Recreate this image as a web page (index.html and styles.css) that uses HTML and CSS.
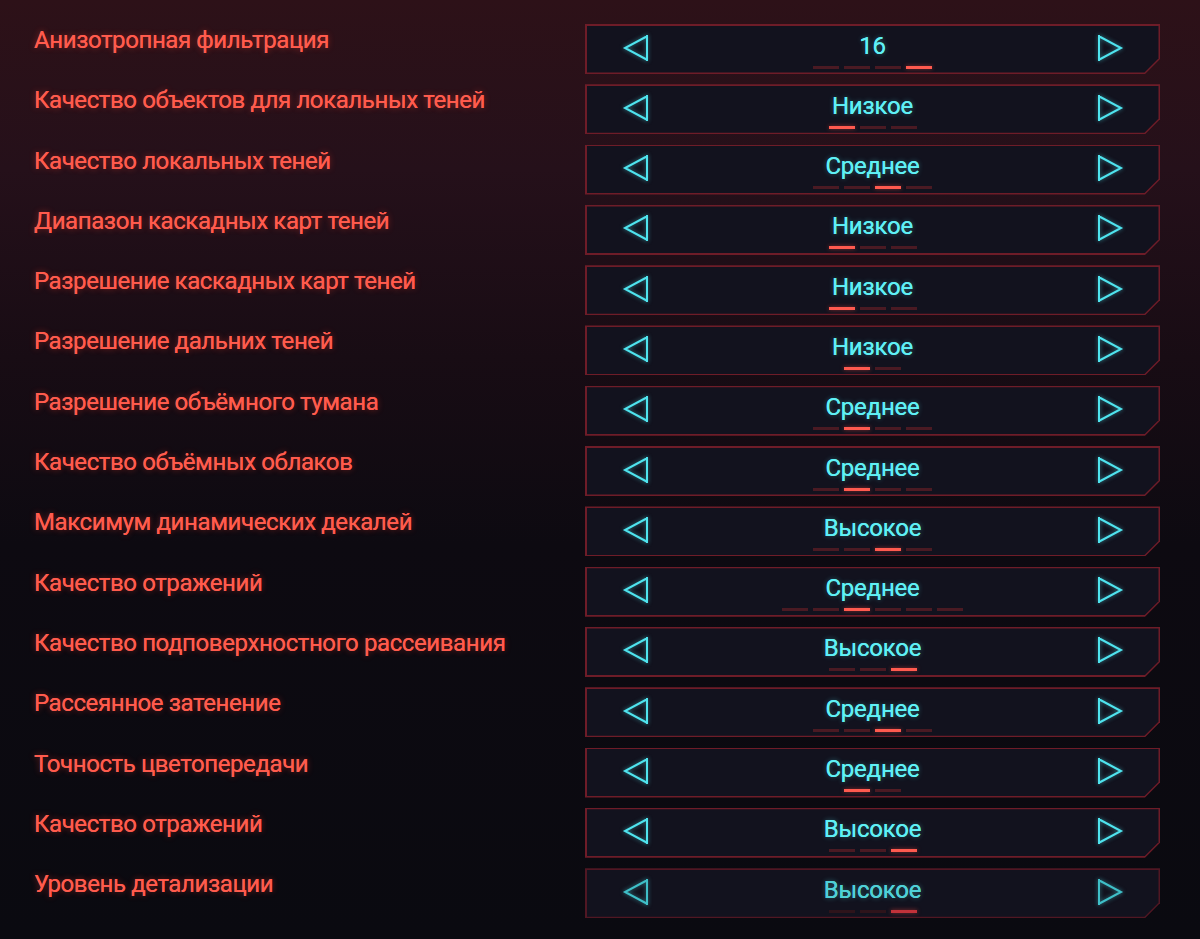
FILE: index.html
```html
<!DOCTYPE html>
<html lang="ru">
<head>
<meta charset="utf-8">
<title>Настройки графики</title>
<link rel="stylesheet" href="styles.css">
</head>
<body>
<main class="settings">
  <div class="row"><div class="label">Анизотропная фильтрация</div><div class="box"><div class="box-inner">
    <svg class="arrow" viewBox="0 0 28 30"><path d="M25 2V28M25.5 3L3 15L25.5 27"/></svg>
    <div class="center"><div class="value">16</div><div class="segs"><i></i><i></i><i></i><i class="on"></i></div></div>
    <svg class="arrow" viewBox="0 0 28 30"><path d="M3 2V28M2.5 3L25 15L2.5 27"/></svg>
  </div></div></div>

  <div class="row"><div class="label">Качество объектов для локальных теней</div><div class="box"><div class="box-inner">
    <svg class="arrow" viewBox="0 0 28 30"><path d="M25 2V28M25.5 3L3 15L25.5 27"/></svg>
    <div class="center"><div class="value">Низкое</div><div class="segs"><i class="on"></i><i></i><i></i></div></div>
    <svg class="arrow" viewBox="0 0 28 30"><path d="M3 2V28M2.5 3L25 15L2.5 27"/></svg>
  </div></div></div>

  <div class="row"><div class="label">Качество локальных теней</div><div class="box"><div class="box-inner">
    <svg class="arrow" viewBox="0 0 28 30"><path d="M25 2V28M25.5 3L3 15L25.5 27"/></svg>
    <div class="center"><div class="value">Среднее</div><div class="segs"><i></i><i></i><i class="on"></i><i></i></div></div>
    <svg class="arrow" viewBox="0 0 28 30"><path d="M3 2V28M2.5 3L25 15L2.5 27"/></svg>
  </div></div></div>

  <div class="row"><div class="label">Диапазон каскадных карт теней</div><div class="box"><div class="box-inner">
    <svg class="arrow" viewBox="0 0 28 30"><path d="M25 2V28M25.5 3L3 15L25.5 27"/></svg>
    <div class="center"><div class="value">Низкое</div><div class="segs"><i class="on"></i><i></i><i></i></div></div>
    <svg class="arrow" viewBox="0 0 28 30"><path d="M3 2V28M2.5 3L25 15L2.5 27"/></svg>
  </div></div></div>

  <div class="row"><div class="label">Разрешение каскадных карт теней</div><div class="box"><div class="box-inner">
    <svg class="arrow" viewBox="0 0 28 30"><path d="M25 2V28M25.5 3L3 15L25.5 27"/></svg>
    <div class="center"><div class="value">Низкое</div><div class="segs"><i class="on"></i><i></i><i></i></div></div>
    <svg class="arrow" viewBox="0 0 28 30"><path d="M3 2V28M2.5 3L25 15L2.5 27"/></svg>
  </div></div></div>

  <div class="row"><div class="label">Разрешение дальних теней</div><div class="box"><div class="box-inner">
    <svg class="arrow" viewBox="0 0 28 30"><path d="M25 2V28M25.5 3L3 15L25.5 27"/></svg>
    <div class="center"><div class="value">Низкое</div><div class="segs"><i class="on"></i><i></i></div></div>
    <svg class="arrow" viewBox="0 0 28 30"><path d="M3 2V28M2.5 3L25 15L2.5 27"/></svg>
  </div></div></div>

  <div class="row"><div class="label">Разрешение объёмного тумана</div><div class="box"><div class="box-inner">
    <svg class="arrow" viewBox="0 0 28 30"><path d="M25 2V28M25.5 3L3 15L25.5 27"/></svg>
    <div class="center"><div class="value">Среднее</div><div class="segs"><i></i><i class="on"></i><i></i><i></i></div></div>
    <svg class="arrow" viewBox="0 0 28 30"><path d="M3 2V28M2.5 3L25 15L2.5 27"/></svg>
  </div></div></div>

  <div class="row"><div class="label">Качество объёмных облаков</div><div class="box"><div class="box-inner">
    <svg class="arrow" viewBox="0 0 28 30"><path d="M25 2V28M25.5 3L3 15L25.5 27"/></svg>
    <div class="center"><div class="value">Среднее</div><div class="segs"><i></i><i class="on"></i><i></i><i></i></div></div>
    <svg class="arrow" viewBox="0 0 28 30"><path d="M3 2V28M2.5 3L25 15L2.5 27"/></svg>
  </div></div></div>

  <div class="row"><div class="label">Максимум динамических декалей</div><div class="box"><div class="box-inner">
    <svg class="arrow" viewBox="0 0 28 30"><path d="M25 2V28M25.5 3L3 15L25.5 27"/></svg>
    <div class="center"><div class="value">Высокое</div><div class="segs"><i></i><i></i><i class="on"></i><i></i></div></div>
    <svg class="arrow" viewBox="0 0 28 30"><path d="M3 2V28M2.5 3L25 15L2.5 27"/></svg>
  </div></div></div>

  <div class="row"><div class="label">Качество отражений</div><div class="box"><div class="box-inner">
    <svg class="arrow" viewBox="0 0 28 30"><path d="M25 2V28M25.5 3L3 15L25.5 27"/></svg>
    <div class="center"><div class="value">Среднее</div><div class="segs"><i></i><i></i><i class="on"></i><i></i><i></i><i></i></div></div>
    <svg class="arrow" viewBox="0 0 28 30"><path d="M3 2V28M2.5 3L25 15L2.5 27"/></svg>
  </div></div></div>

  <div class="row"><div class="label">Качество подповерхностного рассеивания</div><div class="box"><div class="box-inner">
    <svg class="arrow" viewBox="0 0 28 30"><path d="M25 2V28M25.5 3L3 15L25.5 27"/></svg>
    <div class="center"><div class="value">Высокое</div><div class="segs"><i></i><i></i><i class="on"></i></div></div>
    <svg class="arrow" viewBox="0 0 28 30"><path d="M3 2V28M2.5 3L25 15L2.5 27"/></svg>
  </div></div></div>

  <div class="row"><div class="label">Рассеянное затенение</div><div class="box"><div class="box-inner">
    <svg class="arrow" viewBox="0 0 28 30"><path d="M25 2V28M25.5 3L3 15L25.5 27"/></svg>
    <div class="center"><div class="value">Среднее</div><div class="segs"><i></i><i></i><i class="on"></i><i></i></div></div>
    <svg class="arrow" viewBox="0 0 28 30"><path d="M3 2V28M2.5 3L25 15L2.5 27"/></svg>
  </div></div></div>

  <div class="row"><div class="label">Точность цветопередачи</div><div class="box"><div class="box-inner">
    <svg class="arrow" viewBox="0 0 28 30"><path d="M25 2V28M25.5 3L3 15L25.5 27"/></svg>
    <div class="center"><div class="value">Среднее</div><div class="segs"><i class="on"></i><i></i></div></div>
    <svg class="arrow" viewBox="0 0 28 30"><path d="M3 2V28M2.5 3L25 15L2.5 27"/></svg>
  </div></div></div>

  <div class="row"><div class="label">Качество отражений</div><div class="box"><div class="box-inner">
    <svg class="arrow" viewBox="0 0 28 30"><path d="M25 2V28M25.5 3L3 15L25.5 27"/></svg>
    <div class="center"><div class="value">Высокое</div><div class="segs"><i></i><i></i><i class="on"></i></div></div>
    <svg class="arrow" viewBox="0 0 28 30"><path d="M3 2V28M2.5 3L25 15L2.5 27"/></svg>
  </div></div></div>

  <div class="row dim"><div class="label">Уровень детализации</div><div class="box"><div class="box-inner">
    <svg class="arrow" viewBox="0 0 28 30"><path d="M25 2V28M25.5 3L3 15L25.5 27"/></svg>
    <div class="center"><div class="value">Высокое</div><div class="segs"><i></i><i></i><i class="on"></i></div></div>
    <svg class="arrow" viewBox="0 0 28 30"><path d="M3 2V28M2.5 3L25 15L2.5 27"/></svg>
  </div></div></div>
</main>
</body>
</html>
```

FILE: styles.css
```css
html, body {
  margin: 0;
  padding: 0;
  height: 100%;
}

body {
  background: linear-gradient(180deg, #2d1118 0%, #25101a 18%, #180c14 38%, #0d0a11 58%, #0a0a10 100%);
  font-family: Roboto, "Noto Sans", sans-serif;
  overflow: hidden;
}

.settings {
  display: flex;
  flex-direction: column;
  gap: 10.3px;
  padding: 24px 40px 0 34px;
}

.row {
  display: grid;
  grid-template-columns: 551px 575px;
  height: 50px;
}

.label {
  color: #ff5b4d;
  font-size: 24px;
  line-height: 24px;
  letter-spacing: -0.4px;
  padding-top: 4px;
  white-space: nowrap;
  text-shadow: 0 0 0.4px #ff5b4d, 0 0 6px rgba(255, 60, 45, 0.45);
}

.box {
  height: 50px;
  background: #6e1c28;
  padding: 1.5px;
  box-sizing: border-box;
  clip-path: polygon(0 0, 100% 0, 100% calc(100% - 15px), calc(100% - 15px) 100%, 0 100%);
}

.box-inner {
  height: 100%;
  background: #12121e;
  clip-path: polygon(0 0, 100% 0, 100% calc(100% - 14px), calc(100% - 14px) 100%, 0 100%);
  display: grid;
  grid-template-columns: 28px 1fr 28px;
  align-items: start;
  padding: 0 35px 0 35px;
}

.arrow {
  width: 28px;
  height: 30px;
  margin-top: 7px;
  fill: none;
  stroke: #4fe3ee;
  stroke-width: 2;
  stroke-linejoin: miter;
  filter: drop-shadow(0 0 2px rgba(80, 230, 240, 0.5));
}

.center {
  display: flex;
  flex-direction: column;
  align-items: center;
  padding-top: 8px;
}

.value {
  color: #5ff0f5;
  font-size: 24px;
  line-height: 24px;
  letter-spacing: -0.2px;
  text-shadow: 0 0 0.4px #5ff0f5, 0 0 5px rgba(80, 230, 240, 0.4);
}

.segs {
  display: flex;
  gap: 5px;
  margin-top: 8px;
}

.segs i {
  display: block;
  width: 26px;
  height: 3px;
  background: #4a1a23;
}

.segs i.on {
  background: #ff5a4f;
  box-shadow: 0 0 4px rgba(255, 70, 60, 0.5);
}

.dim .value {
  color: #4fd0d6;
}

.dim .arrow {
  stroke: #3fbfc8;
}

.dim .segs i {
  background: #2e141b;
}

.dim .segs i.on {
  background: #c2323a;
}

.dim .box {
  background: #501723;
}
```
